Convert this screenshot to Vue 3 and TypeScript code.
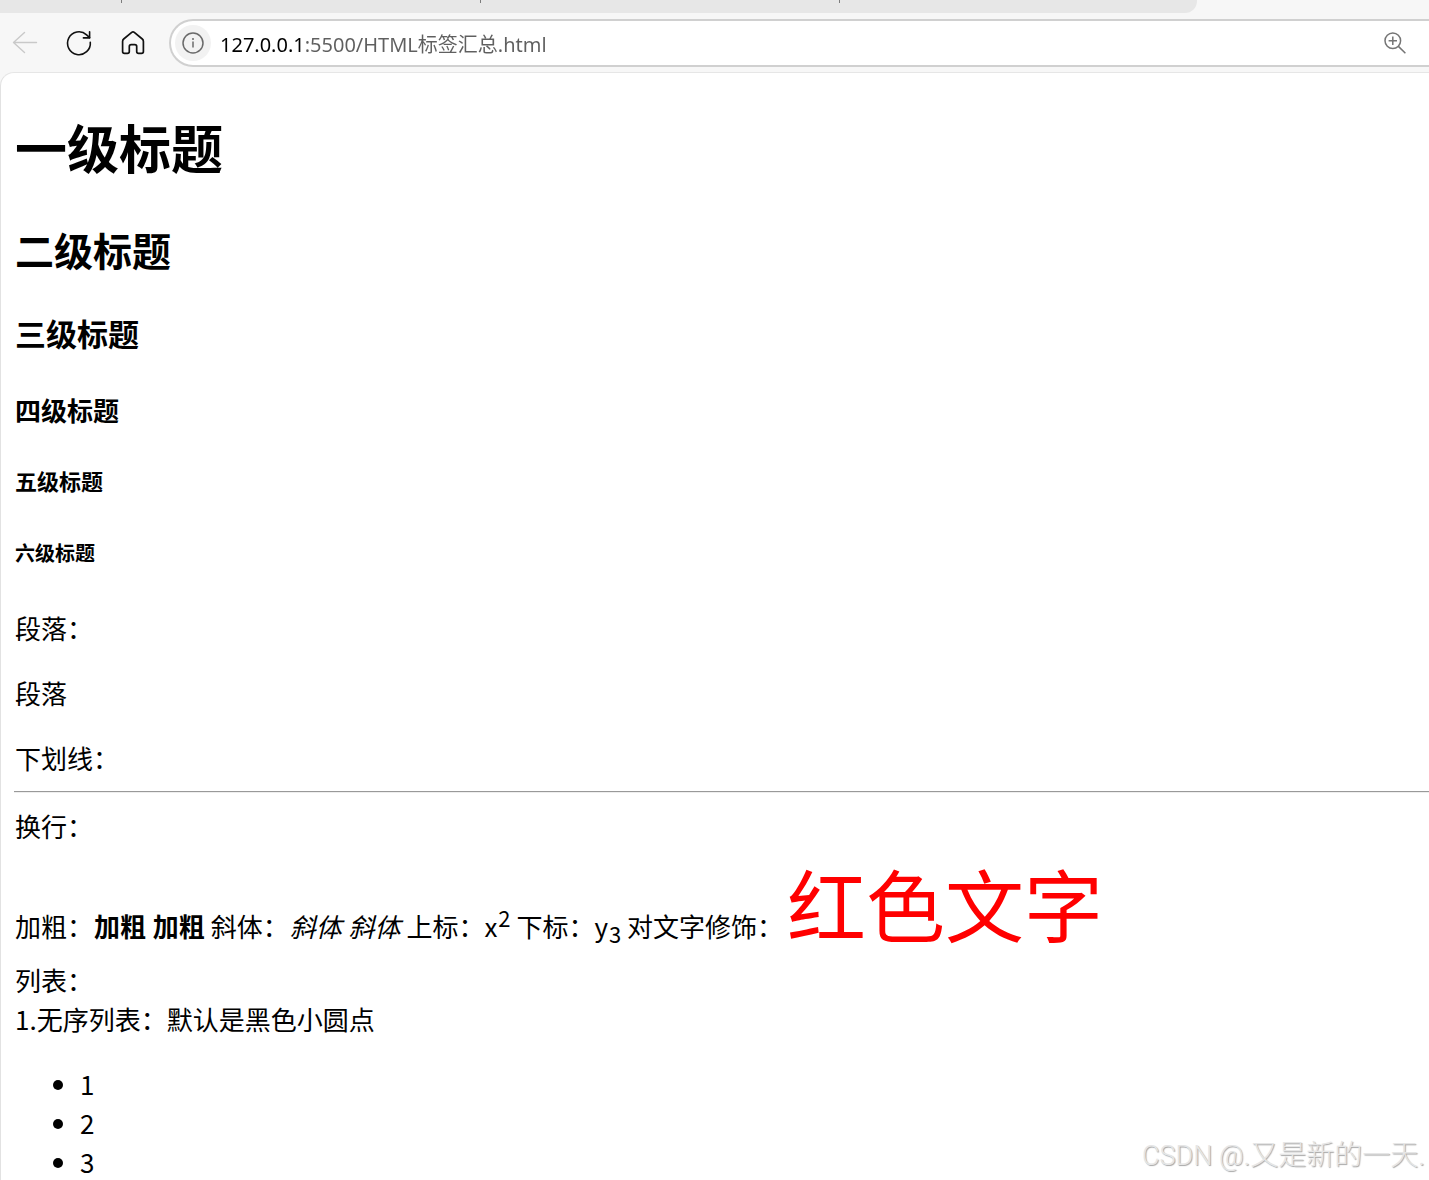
<script setup lang="ts">
import { ref } from 'vue'

const address = ref('127.0.0.1:5500/HTML标签汇总.html')

const headings = [
  { tag: 'h1', text: '一级标题' },
  { tag: 'h2', text: '二级标题' },
  { tag: 'h3', text: '三级标题' },
  { tag: 'h4', text: '四级标题' },
  { tag: 'h5', text: '五级标题' },
  { tag: 'h6', text: '六级标题' },
]

const items = [1, 2, 3]
</script>

<template>
  <div class="window">
    <header class="chrome">
      <div class="tabs">
        <span class="tab tab-cut"></span>
        <span class="tab"></span>
        <span class="tab"></span>
      </div>
      <div class="toolbar">
        <button class="tool back" type="button" aria-label="返回" disabled>
          <svg viewBox="0 0 28 28" fill="none" stroke="currentColor" stroke-width="1.4" stroke-linecap="round" stroke-linejoin="round">
            <path d="M25.5 13.5H2.5M13.5 3.5L2.5 13.5L13.5 23.5" />
          </svg>
        </button>
        <button class="tool" type="button" aria-label="刷新">
          <svg viewBox="0 0 28 28" fill="none" stroke="currentColor" stroke-width="1.6" stroke-linecap="round" stroke-linejoin="round">
            <path d="M25.3 13.2A11.4 11.4 0 1 1 21.6 5.8L24.6 8.6" />
            <path d="M24.6 2.8V8.9H18.4" />
          </svg>
        </button>
        <button class="tool" type="button" aria-label="主页">
          <svg viewBox="0 0 28 28" fill="none" stroke="currentColor" stroke-width="1.7" stroke-linejoin="round">
            <path d="M12.7 3.4Q14 2.3 15.3 3.4L23.3 10Q24.4 10.9 24.4 12.4V22.4Q24.4 24.3 22.5 24.3H19.6Q17.7 24.3 17.7 22.4V17.6Q17.7 15.7 15.8 15.7H12.2Q10.3 15.7 10.3 17.6V22.4Q10.3 24.3 8.4 24.3H5.5Q3.6 24.3 3.6 22.4V12.4Q3.6 10.9 4.7 10Z" />
          </svg>
        </button>
        <div class="address">
          <button class="info" type="button" aria-label="网站信息">
            <svg viewBox="0 0 24 24" fill="none" stroke="currentColor" stroke-width="1.5">
              <circle cx="12" cy="12" r="10" />
              <path d="M12 10.4V16.6" />
              <circle cx="12" cy="7.9" r="1" fill="currentColor" stroke="none" />
            </svg>
          </button>
          <input v-model="address" class="url" type="text" aria-label="地址" spellcheck="false" />
          <button class="zoom" type="button" aria-label="缩放">
            <svg viewBox="0 0 24 24" fill="none" stroke="currentColor" stroke-width="1.5">
              <circle cx="9.8" cy="9.8" r="7.8" />
              <path d="M15.4 15.4L22.4 22.2M9.8 5.6V14M5.6 9.8H14" />
            </svg>
          </button>
        </div>
      </div>
    </header>

    <main class="page">
      <component :is="h.tag" v-for="h in headings" :key="h.tag">{{ h.text }}</component>
      <div>段落：</div>
      <p>段落</p>
      <div>下划线：</div>
      <hr />
      <div>换行：</div>
      <div class="inline-row">加粗：<b>加粗</b> <strong>加粗</strong> 斜体：<i>斜体</i> <em>斜体</em> 上标：x<sup>2</sup> 下标：y<sub>3</sub> 对文字修饰：<span class="red">红色文字</span></div>
      <div>列表：</div>
      <div>1.无序列表：默认是黑色小圆点</div>
      <ul>
        <li v-for="n in items" :key="n">{{ n }}</li>
      </ul>
    </main>
    <div class="watermark"><span class="site">CSDN @</span>.又是新的一天.</div>
  </div>
</template>

<style>
body {
  background: #f7f7f7;
}
</style>

<style scoped>
.window {
  position: relative;
  display: flex;
  flex-direction: column;
  height: 100vh;
  overflow: hidden;
  background: #f7f7f7;
}

.chrome {
  flex: none;
}

.tabs {
  display: flex;
  width: 1197px;
  max-width: 100%;
  height: 13px;
  background: #e7e7e7;
  border-bottom-right-radius: 12px;
}

.tab {
  flex: none;
  box-sizing: border-box;
  width: 359px;
  height: 3px;
  border-right: 1px solid #7c7c7c;
}

.tab-cut {
  width: 122px;
}

.toolbar {
  display: flex;
  align-items: center;
  height: 59px;
  padding-left: 11px;
}

.tool,
.info,
.zoom {
  display: flex;
  align-items: center;
  justify-content: center;
  flex: none;
  padding: 0;
  border: 0;
  background: none;
}

.tool {
  width: 28px;
  height: 28px;
  margin-right: 26px;
  color: #111;
}

.tool svg {
  width: 28px;
  height: 28px;
}

.back {
  color: #c9c9c9;
}

.address {
  display: flex;
  align-items: center;
  flex: 1;
  box-sizing: border-box;
  height: 48px;
  margin-left: -4px;
  padding: 0 22px 0 4px;
  border: 2px solid #d0d0d0;
  border-right: 0;
  border-radius: 24px 0 0 24px;
  background: #fff;
}

.info {
  width: 36px;
  height: 36px;
  border-radius: 50%;
  background: #f2f2f2;
  color: #6a6a6a;
}

.info svg,
.zoom svg {
  width: 24px;
  height: 24px;
}

.zoom {
  color: #757575;
}

/* the host is black, the rest of the address is grey */
.url {
  flex: 1;
  min-width: 0;
  height: 36px;
  margin-left: 9px;
  padding: 1px 0 0;
  border: 0;
  outline: 0;
  background: linear-gradient(90deg, #000 81px, #5f5f5f 81px);
  background-clip: text;
  color: transparent;
  caret-color: #000;
  font: 20px/34px "Noto Sans", "Noto Sans CJK SC", sans-serif;
}

.page {
  flex: 1 0 auto;
  padding-left: 14px;
  border-top: 1px solid #e6e6e6;
  border-left: 1px solid #e2e2e2;
  border-top-left-radius: 14px;
  background: #fff;
  color: #000;
  font: 26px/39px "Noto Sans CJK SC", sans-serif;
}

h1 {
  margin: 35px 0;
  font-size: 52px;
  line-height: 78px;
}

h2 {
  margin: 0 0 32px;
  font-size: 39px;
  line-height: 57px;
}

h3 {
  margin: 0 0 35px;
  font-size: 31px;
  line-height: 45px;
}

h4 {
  margin: 0 0 35px;
  font-size: 26px;
  line-height: 39px;
}

h5 {
  margin: 0 0 41px;
  font-size: 22px;
  line-height: 33px;
}

h6 {
  margin: 0 0 41px;
  font-size: 20px;
  line-height: 29px;
}

p {
  margin: 26px 0;
}

hr {
  margin: 14px 0 13px -1px;
  border: 0;
  border-top: 1px solid #999;
  border-bottom: 1px solid #eee;
}

.inline-row > * {
  margin-left: 1px;
}

.inline-row > .red {
  margin-left: 4px;
  color: #f00;
  font-size: 79px;
  line-height: 115px;
}

sup,
sub {
  font-size: 22px;
  line-height: 22px;
}

ul {
  margin: 26px 0;
  padding-left: 65px;
}

.watermark {
  position: absolute;
  right: 4px;
  bottom: 4px;
  color: #e6e6e6;
  font: 300 28px/40px Roboto, "Noto Sans CJK SC", sans-serif;
  text-shadow: 1px 1px 1px #a4a4a4;
}

.site {
  font-size: 27px;
}
</style>
